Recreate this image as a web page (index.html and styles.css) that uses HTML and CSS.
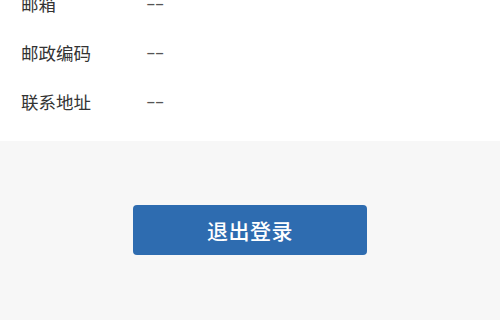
FILE: index.html
```html
<!DOCTYPE html>
<html lang="zh-CN">

<head>
  <meta charset="UTF-8">
  <meta name="viewport" content="width=device-width, initial-scale=1.0">
  <title>个人信息</title>
  <link rel="stylesheet" href="styles.css">
</head>

<body>
  <div class="page">
    <ul class="info-list">
      <li class="info-row"><span class="label">邮箱</span><span class="value">--</span></li>
      <li class="info-row"><span class="label">邮政编码</span><span class="value">--</span></li>
      <li class="info-row"><span class="label">联系地址</span><span class="value">--</span></li>
    </ul>
    <div class="actions">
      <button class="logout-btn" type="button">退出登录</button>
    </div>
  </div>
</body>

</html>
```

FILE: styles.css
```css
body,
ul {
  margin: 0;
  padding: 0;
}

body {
  font-family: "Noto Sans CJK SC", "Noto Sans", sans-serif;
  background-color: #f7f7f7;
  overflow: hidden;
}

.page {
  width: 500px;
  height: 320px;
}

.info-list {
  list-style-type: none;
  background-color: #ffffff;
  margin-top: -21px;
  padding-bottom: 15px;
}

.info-row {
  display: flex;
  align-items: center;
  height: 49px;
  padding-left: 21px;
}

.label {
  width: 125px;
  font-size: 17.5px;
  color: #333333;
}

.value {
  display: inline-block;
  font-family: "Liberation Sans", sans-serif;
  font-size: 17px;
  color: #555555;
  letter-spacing: -0.5px;
  transform: scaleX(1.7);
  transform-origin: left center;
}

.actions {
  display: flex;
  justify-content: center;
  padding-top: 64px;
}

.logout-btn {
  width: 234px;
  height: 50px;
  border: none;
  border-radius: 4px;
  background-color: #2e6cb0;
  color: #ffffff;
  font-family: "Noto Sans CJK SC", sans-serif;
  font-size: 21px;
  font-weight: 500;
  letter-spacing: 0.5px;
  cursor: pointer;
}
```
